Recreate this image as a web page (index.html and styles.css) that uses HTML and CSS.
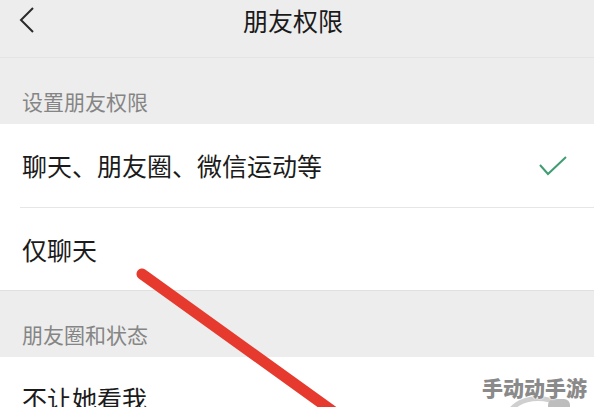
FILE: index.html
```html
<!DOCTYPE html>
<html lang="zh-CN">
<head>
  <meta charset="UTF-8" />
  <title>朋友权限</title>
  <link rel="stylesheet" href="styles.css">
</head>
<body>
  <header class="nav">
    <span class="back">
      <svg width="16" height="26" viewBox="0 0 16 26">
        <polyline points="14,1 2,13 14,25" fill="none" stroke="#2a2a2a" stroke-width="2" />
      </svg>
    </span>
    <h1>朋友权限</h1>
    <span></span>
  </header>

  <div class="group-label">设置朋友权限</div>
  <ul class="list">
    <li>
      <span>聊天、朋友圈、微信运动等</span>
      <svg class="check" width="30" height="22" viewBox="0 0 30 22">
        <polyline points="2,10 10,19 28,2" fill="none" stroke="#3f9d72" stroke-width="2" />
      </svg>
    </li>
    <li><span>仅聊天</span></li>
  </ul>

  <div class="group-label">朋友圈和状态</div>
  <ul class="list">
    <li><span>不让她看我</span></li>
  </ul>

  <!-- 标注的红线 -->
  <svg class="mark" width="594" height="407" viewBox="0 0 594 407">
    <line x1="142" y1="274" x2="345" y2="420" stroke="#e63a2e" stroke-width="11" stroke-linecap="round" />
  </svg>

  <div class="watermark">
    <span class="wm-text">手动动手游</span>
    <span class="wm-ring"></span>
    <span class="wm-blob"></span>
  </div>
</body>
</html>
```

FILE: styles.css
```css
* {
  box-sizing: border-box;
}
body {
  margin: 0;
  width: 594px;
  height: 407px;
  overflow: hidden;
  position: relative;
  background: #ededed;
  font-family: "Noto Sans CJK SC", "Noto Sans", sans-serif;
  color: #1b1b1b;
}

/* 顶部导航 */
.nav {
  height: 58px;
  display: grid;
  grid-template-columns: 1fr auto 1fr;
  align-items: start;
  padding: 0 19px;
  border-bottom: 1px solid #e4e4e4;
}
.back {
  padding-top: 7px;
}
.back svg {
  display: block;
}
.nav h1 {
  margin: 0 8px 0 0;
  padding-top: 8px;
  font-size: 25px;
  line-height: 25px;
  font-weight: 400;
  color: #1a1a1a;
}

/* 分组标题 */
.group-label {
  height: 66px;
  display: flex;
  align-items: flex-end;
  padding: 0 22px 12px;
  font-size: 21px;
  line-height: 21px;
  color: #858585;
}

/* 列表 */
.list {
  list-style: none;
  margin: 0;
  padding: 0;
  background: #fff;
  border-bottom: 1px solid #e0e0e0;
}
.list li {
  height: 83px;
  margin-left: 20px;
  padding: 0 26px 0 2px;
  display: flex;
  align-items: center;
  justify-content: space-between;
  font-size: 25px;
  line-height: 25px;
}
.list li + li {
  border-top: 1px solid #e6e6e6;
}
.check {
  display: block;
}

/* 覆盖层 */
.mark {
  position: absolute;
  top: 0;
  left: 0;
}
.watermark {
  position: absolute;
  left: 482px;
  top: 374px;
  width: 112px;
  height: 33px;
}
.wm-text {
  position: relative;
  z-index: 1;
  display: block;
  font-size: 21px;
  line-height: 26px;
  font-weight: 900;
  letter-spacing: 0;
  color: #8a8a8a;
  text-shadow: 0 0 2px #fff, 0 0 2px #fff;
}
.wm-ring {
  position: absolute;
  left: 24px;
  top: 22px;
  width: 64px;
  height: 44px;
  border: 5px solid #cfcfcf;
  border-radius: 50%;
}
.wm-blob {
  position: absolute;
  left: 66px;
  top: 25px;
  width: 22px;
  height: 14px;
  background: #bdbdbd;
  border-radius: 6px 6px 0 0;
}
```
